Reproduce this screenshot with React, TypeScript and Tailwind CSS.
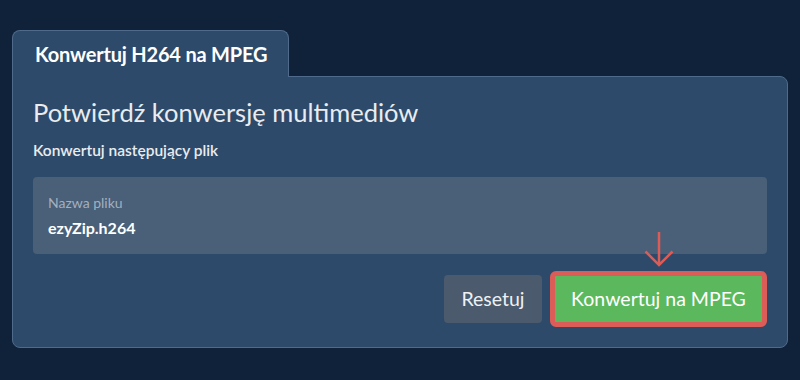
import React from 'react';

const App: React.FC = () => {
  return (
    <div
      className="w-[800px] h-[380px] bg-[#10223a] px-3 pt-[30px]"
      style={{ fontFamily: 'Lato, "Noto Sans", sans-serif' }}
    >
      {/* Tab */}
      <div className="relative z-10 -mb-px w-[277px] h-[47px] flex items-center pl-[22px] bg-[#2d4a6a] border border-b-0 border-[#4f6a8a] rounded-t-lg">
        <span className="text-[20px] font-bold text-white tracking-[-0.2px]">Konwertuj H264 na MPEG</span>
      </div>

      {/* Panel */}
      <div className="w-[776px] h-[272px] bg-[#2d4a6a] border border-[#4f6a8a] rounded-b-lg rounded-tr-lg px-5 pt-5">
        <h2 className="text-[25.5px] leading-[30px] text-[#e9ecef]">Potwierdź konwersję multimediów</h2>
        <p className="mt-[13px] text-[15.5px] leading-5 font-semibold text-[#e9ecef]">Konwertuj następujący plik</p>

        <div className="mt-[17px] h-[77px] bg-[#4a5f78] rounded px-[15px] pt-[18px]">
          <div className="text-[14px] leading-4 text-[#a3b0bf]">Nazwa pliku</div>
          <div className="mt-[7px] text-[16px] leading-5 font-bold text-white">ezyZip.h264</div>
        </div>

        <div className="mt-[17px] flex items-center justify-end gap-2">
          <button className="h-12 w-[98px] rounded bg-[#4b5a6d] text-[19.5px] text-[#eef1f4]">Resetuj</button>
          <div className="relative">
            <svg
              className="absolute bottom-full mb-[3px] left-1/2 -translate-x-1/2"
              width="30"
              height="36"
              viewBox="0 0 30 36"
              fill="none"
              stroke="#dc5c57"
              strokeWidth="2.5"
            >
              <path d="M15 0v33" />
              <path d="M1.5 19.5L15 33l13.5-13.5" />
            </svg>
            <button className="h-14 w-[217px] rounded-md border-[5px] border-[#dc5c57] bg-[#5cb85c] text-[19.5px] text-white">
              Konwertuj na MPEG
            </button>
          </div>
        </div>
      </div>
    </div>
  );
};

export default App;
